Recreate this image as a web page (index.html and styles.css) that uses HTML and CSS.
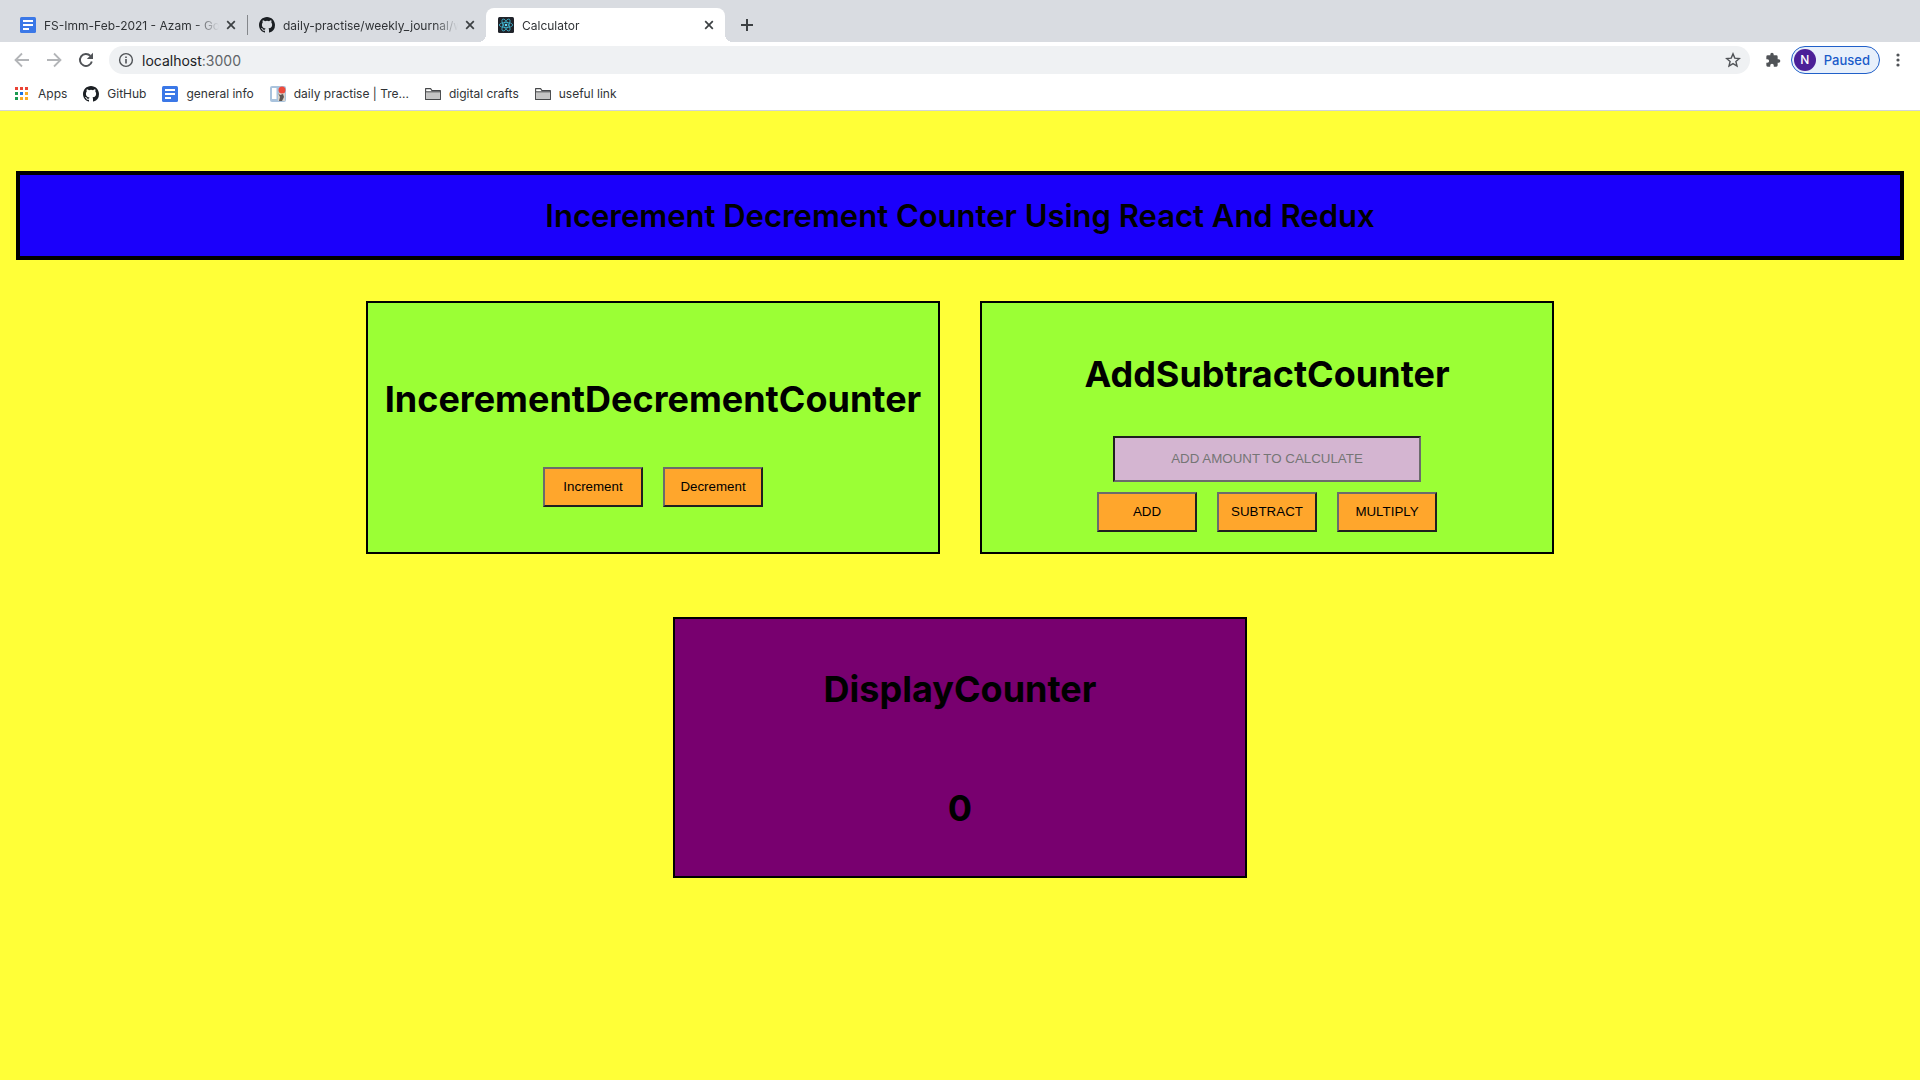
FILE: index.html
```html
<!DOCTYPE html>
<html lang="en">
<head>
<meta charset="utf-8">
<title>Calculator</title>
<link rel="stylesheet" href="styles.css">
</head>
<body>
<svg class="sprite" aria-hidden="true">
  <symbol id="doc" viewBox="0 0 16 16"><rect width="16" height="16" rx="1.5" fill="#3b78e7"/><path d="M3 4h10M3 8h10M3 12h6" stroke="#fff" stroke-width="2"/></symbol>
  <symbol id="github" viewBox="0 0 16 16"><path fill="#1b1f23" d="M8 0C3.58 0 0 3.58 0 8c0 3.54 2.29 6.53 5.47 7.59.4.07.55-.17.55-.38 0-.19-.01-.82-.01-1.49-2.01.37-2.53-.49-2.69-.94-.09-.23-.48-.94-.82-1.13-.28-.15-.68-.52-.01-.53.63-.01 1.08.58 1.23.82.72 1.21 1.87.87 2.33.66.07-.52.28-.87.51-1.07-1.78-.2-3.64-.89-3.64-3.95 0-.87.31-1.59.82-2.15-.08-.2-.36-1.02.08-2.12 0 0 .67-.21 2.2.82a7.6 7.6 0 0 1 4 0c1.53-1.04 2.2-.82 2.2-.82.44 1.1.16 1.92.08 2.12.51.56.82 1.27.82 2.15 0 3.07-1.87 3.75-3.65 3.95.29.25.54.73.54 1.48 0 1.07-.01 1.93-.01 2.2 0 .21.15.46.55.38A8.01 8.01 0 0 0 16 8c0-4.42-3.58-8-8-8z"/></symbol>
  <symbol id="close" viewBox="0 0 16 16"><path d="M4.2 4.2l7.6 7.6M11.8 4.2l-7.6 7.6" stroke="#3c4043" stroke-width="1.7"/></symbol>
  <symbol id="folder" viewBox="0 0 16 16"><path d="M.6 13.4V2.600h5l1.400 2h8.400v8.800z" fill="#fff" stroke="#454749" stroke-width="1.1" stroke-linejoin="round"/><path d="M1.100 6h13.800v6.900H1.100z" fill="#c4c4c4"/><path d="M.6 5.800h14.800" stroke="#454749"/></symbol>
</svg>

<header class="browser">
  <div class="tabs">
    <div class="tab tab-first"><svg class="icon"><use href="#doc"/></svg><span class="tab-title">FS-Imm-Feb-2021 - Azam - Go</span><button class="icon-button" aria-label="Close tab"><svg class="icon"><use href="#close"/></svg></button></div>
    <div class="tab tab-divided"><svg class="icon"><use href="#github"/></svg><span class="tab-title">daily-practise/weekly_journal/w</span><button class="icon-button" aria-label="Close tab"><svg class="icon"><use href="#close"/></svg></button></div>
    <div class="tab tab-active"><svg class="icon" viewBox="0 0 16 16"><rect width="16" height="16" rx="1.5" fill="#20232a"/><g fill="none" stroke="#3fb5d0" stroke-width=".8"><ellipse cx="8" cy="8" rx="6.7" ry="2.6"/><ellipse cx="8" cy="8" rx="6.7" ry="2.6" transform="rotate(60 8 8)"/><ellipse cx="8" cy="8" rx="6.7" ry="2.6" transform="rotate(120 8 8)"/></g><circle cx="8" cy="8" r="1.3" fill="#61dafb"/></svg><span class="tab-title">Calculator</span><button class="icon-button" aria-label="Close tab"><svg class="icon"><use href="#close"/></svg></button></div>
    <button class="icon-button new-tab" aria-label="New tab"><svg class="icon" viewBox="0 0 16 16"><path d="M8 2v12M2 8h12" stroke="#3c4043" stroke-width="2"/></svg></button>
  </div>
  <div class="toolbar">
    <button class="icon-button" aria-label="Back"><svg class="icon" viewBox="0 0 16 16"><path d="M15 8H2M8 1.500L1.500 8 8 14.500" fill="none" stroke="#b3b5b8" stroke-width="1.8"/></svg></button>
    <button class="icon-button" aria-label="Forward"><svg class="icon" viewBox="0 0 16 16"><path d="M1 8h13M8 1.500L14.500 8 8 14.500" fill="none" stroke="#b3b5b8" stroke-width="1.8"/></svg></button>
    <button class="icon-button" aria-label="Reload"><svg class="icon" viewBox="0 0 16 16"><path d="M13.800 9.400A6 6 0 1 1 12.400 3.900" fill="none" stroke="#505357" stroke-width="1.9"/><path d="M15 .8V7H8.800z" fill="#505357"/></svg></button>
    <div class="address">
      <svg class="icon" viewBox="0 0 16 16"><circle cx="8" cy="8" r="6.4" fill="none" stroke="#505357" stroke-width="1.4"/><path d="M8 7v4.400M8 4.400V6" stroke="#505357" stroke-width="1.6"/></svg>
      <span class="url">localhost<span class="port">:3000</span></span>
      <button class="icon-button" aria-label="Bookmark this tab"><svg class="icon" viewBox="0 0 16 16"><path d="M8 1.900l1.800 4.200 4.600.4-3.500 3 1.100 4.500L8 11.600 4 14l1.100-4.500-3.500-3 4.600-.4z" fill="none" stroke="#505357" stroke-width="1.4"/></svg></button>
    </div>
    <div class="toolbar-end">
      <button class="icon-button" aria-label="Extensions"><svg class="icon" viewBox="0 0 24 24"><path fill="#505357" d="M20.500 11H19V7a2 2 0 0 0-2-2h-4V3.500a2.500 2.500 0 0 0-5 0V5H4a2 2 0 0 0-2 2v3.800h1.500a2.700 2.700 0 0 1 0 5.400H2V20a2 2 0 0 0 2 2h3.800v-1.500a2.700 2.700 0 0 1 5.400 0V22H17a2 2 0 0 0 2-2v-4h1.500a2.500 2.500 0 0 0 0-5z"/></svg></button>
      <button class="profile"><span class="avatar">N</span>Paused</button>
      <button class="icon-button" aria-label="Menu"><svg class="icon" viewBox="0 0 16 16"><g fill="#505357"><circle cx="8" cy="3" r="1.6"/><circle cx="8" cy="8" r="1.6"/><circle cx="8" cy="13" r="1.6"/></g></svg></button>
    </div>
  </div>
  <nav class="bookmarks">
    <a href="#"><svg class="icon" viewBox="0 0 16 16"><path fill="#ea4335" d="M1 1h3v3H1zM6 1h3v3H6zM11 1h3v3h-3z"/><path fill="#1a9a50" d="M1 6h3v3H1zM1 11h3v3H1z"/><path fill="#1a73e8" d="M6 6h3v3H6z"/><path fill="#f9ab28" d="M11 6h3v3h-3zM6 11h3v3H6zM11 11h3v3h-3z"/></svg>Apps</a>
    <a href="#"><svg class="icon"><use href="#github"/></svg>GitHub</a>
    <a href="#"><svg class="icon"><use href="#doc"/></svg>general info</a>
    <a href="#"><svg class="icon" viewBox="0 0 16 16"><rect width="16" height="16" rx="2" fill="#a9c3dd"/><rect x="2" y="2" width="4.500" height="11" fill="#fff"/><path d="M8 7h7v8H8z" fill="#d9d4cc"/><path d="M8 7l2 2 3-1 1 3-2 4H9l1-4z" fill="#5d5552"/><circle cx="12" cy="4" r="3.500" fill="#ee4b3c"/></svg>daily practise | Tre...</a>
    <a href="#"><svg class="icon"><use href="#folder"/></svg>digital crafts</a>
    <a href="#"><svg class="icon"><use href="#folder"/></svg>useful link</a>
  </nav>
</header>

<main class="app">
  <h1 class="banner">Incerement Decrement Counter Using React And Redux</h1>
  <div class="row">
    <section class="card card-step">
      <h2>IncerementDecrementCounter</h2>
      <div class="actions"><button class="action">Increment</button><button class="action">Decrement</button></div>
    </section>
    <section class="card card-amount">
      <h2>AddSubtractCounter</h2>
      <input class="amount" type="text" aria-label="Amount" placeholder="ADD AMOUNT TO CALCULATE">
      <div class="actions"><button class="action">ADD</button><button class="action">SUBTRACT</button><button class="action">MULTIPLY</button></div>
    </section>
  </div>
  <div class="row">
    <section class="card card-display">
      <h2>DisplayCounter</h2>
      <output class="count">0</output>
    </section>
  </div>
</main>
</body>
</html>
```
FILE: styles.css
```css
* { box-sizing: border-box; }

body {
  margin: 0;
  min-height: 100vh;
  display: flex;
  flex-direction: column;
  background: #ffff37;
  color: #000;
  font-family: Inter, "Liberation Sans", sans-serif;
}

.sprite { display: none; }
.icon { width: 16px; height: 16px; flex: none; display: block; }

.icon-button {
  flex: none;
  padding: 0;
  border: 0;
  background: none;
}

/* Browser frame */
.browser {
  background: #fff;
  border-bottom: 1px solid #d3d5d8;
  color: #303336;
  font-size: 12px;
}

.tabs {
  display: flex;
  height: 42px;
  padding: 8px 8px 0 0;
  background: #d9dce1;
}

.tab {
  position: relative;
  display: flex;
  align-items: center;
  width: 239px;
  padding: 0 8px 0 12px;
}
.tab-first { width: 247px; padding-left: 20px; }
.tab-active { background: #fff; border-radius: 8px 8px 0 0; }
.tab-active::before,
.tab-active::after {
  content: "";
  position: absolute;
  bottom: 0;
  width: 8px;
  height: 8px;
}
.tab-active::before {
  right: 100%;
  background: radial-gradient(circle at 0 0, transparent 8px, #fff 8px);
}
.tab-active::after {
  left: 100%;
  background: radial-gradient(circle at 100% 0, transparent 8px, #fff 8px);
}
.tab-divided::before {
  content: "";
  position: absolute;
  left: 0;
  top: 7px;
  width: 1px;
  height: 20px;
  background: #84878b;
}
.tab-title {
  flex: 1;
  min-width: 0;
  margin: 0 4px 0 8px;
  overflow: hidden;
  white-space: nowrap;
  mask-image: linear-gradient(to left, transparent, #000 24px);
}
.new-tab { margin-left: 14px; }

.toolbar {
  display: flex;
  align-items: center;
  gap: 14px;
  padding: 4px 13px;
}
.toolbar .icon-button { padding: 0 1px; }
.toolbar-end { display: flex; align-items: center; gap: 9px; }
.address {
  flex: 1;
  display: flex;
  align-items: center;
  gap: 8px;
  height: 28px;
  padding: 0 8px 0 9px;
  border-radius: 14px;
  background: #eff1f3;
  font-size: 14px;
}
.url { flex: 1; color: #202124; }
.port { color: #606468; }
.profile {
  display: flex;
  align-items: center;
  gap: 8px;
  height: 28px;
  padding: 0 9px 0 2px;
  border: 1px solid #2160c9;
  border-radius: 14px;
  background: #e8f0fb;
  color: #1a5bc9;
  font: 500 13px Inter, sans-serif;
}
.avatar {
  width: 22px;
  border-radius: 50%;
  background: #4b2098;
  color: #fff;
  font-size: 12px;
  line-height: 22px;
}

.bookmarks {
  display: flex;
  gap: 16px;
  padding: 8px 14px;
}
.bookmarks a {
  display: flex;
  align-items: center;
  gap: 8px;
  color: inherit;
  line-height: 16px;
  text-decoration: none;
}

/* Counter app */
.app { padding: 60px 16px; }

.banner {
  margin: 0 0 41px;
  padding: 20px;
  border: 4px solid #000;
  background: #1b00fb;
  font-size: 31px;
  font-weight: 600;
  line-height: 41px;
  text-align: center;
}

.row {
  display: flex;
  justify-content: center;
  gap: 40px;
  margin-bottom: 63px;
}

.card {
  flex: 0 1 574px;
  display: flex;
  flex-direction: column;
  align-items: center;
  border: 2px solid #000;
  background: #9bff35;
}
.card h2, .count {
  margin: 0;
  font-size: 36px;
  font-weight: 700;
  line-height: 44px;
}
.card-step { padding: 74px 0 45px; gap: 46px; }
.card-amount { padding: 49px 0 20px; }
.card-amount h2 { margin-bottom: 40px; }
.card-display { padding: 48px 0 46px; gap: 75px; background: #78006f; }

.actions { display: flex; gap: 20px; }
.action {
  width: 100px;
  height: 40px;
  padding: 0 0 2px;
  border: 2px solid;
  border-color: #6b6b6b #1f1f1f #1f1f1f #6b6b6b;
  background: #ffa62c;
  color: #000;
  font-family: "Liberation Sans", Arial, sans-serif;
}
.amount {
  width: 308px;
  height: 46px;
  margin-bottom: 10px;
  padding: 0 2px 2px;
  border: 2px solid;
  border-color: #1f1f1f #6b6b6b #6b6b6b #1f1f1f;
  background: #d4b5d1;
  font-family: "Liberation Sans", Arial, sans-serif;
  text-align: center;
}
.amount::placeholder { color: #757575; }
```
